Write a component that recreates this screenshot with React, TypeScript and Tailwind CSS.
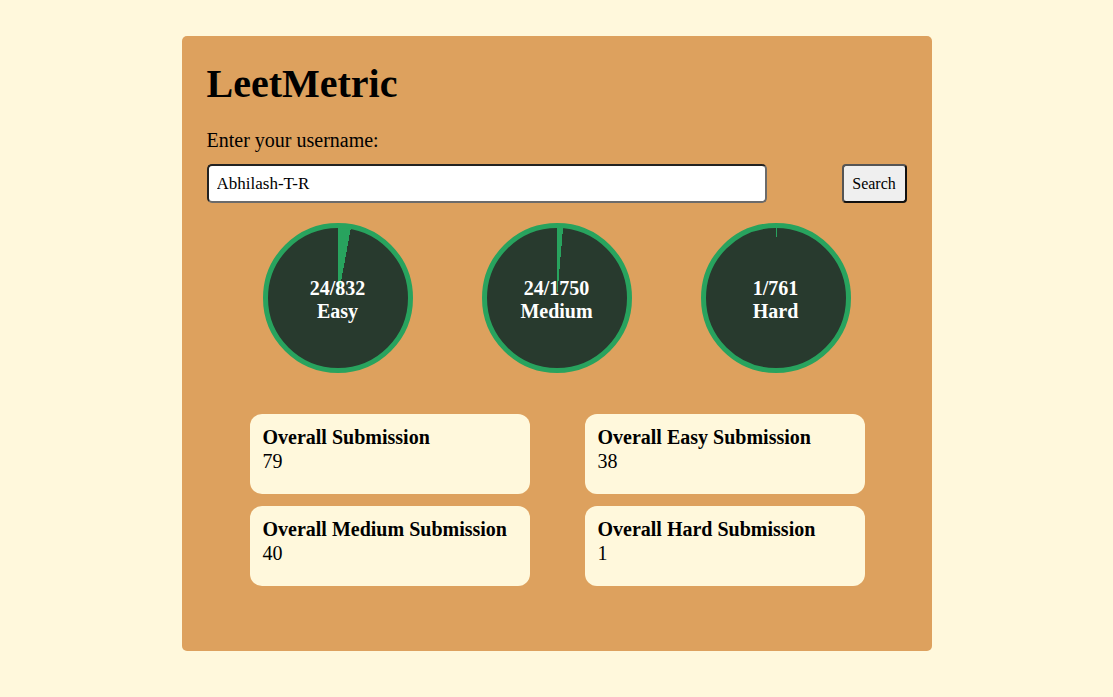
import React from "react";

type Stat = { label: string; solved: number; total: number };

const stats: Stat[] = [
  { label: "Easy", solved: 24, total: 832 },
  { label: "Medium", solved: 24, total: 1750 },
  { label: "Hard", solved: 1, total: 761 },
];

const cards = [
  { title: "Overall Submission", value: 79 },
  { title: "Overall Easy Submission", value: 38 },
  { title: "Overall Medium Submission", value: 40 },
  { title: "Overall Hard Submission", value: 1 },
];

const ProgressCircle = ({ stat }: { stat: Stat }) => {
  const pct = (stat.solved / stat.total) * 100;
  return (
    <div
      className="w-[150px] h-[150px] rounded-full border-[5px] border-[#28a35e] flex flex-col items-center justify-center pt-[4px] text-white font-bold text-[20px] leading-[23px]"
      style={{
        background: `conic-gradient(#28a35e 0% ${pct}%, #283a2e ${pct}% 100%)`,
      }}
    >
      <span>
        {stat.solved}/{stat.total}
      </span>
      <span>{stat.label}</span>
    </div>
  );
};

export default function App() {
  return (
    <div
      className="min-h-screen bg-[#fff8dc] pt-[36px] text-black"
      style={{ fontFamily: '"Liberation Serif", "Times New Roman", serif' }}
    >
      <div className="mx-auto w-[750px] h-[615px] rounded-[5px] bg-[#dda15e] px-[25px] pt-[25px]">
        <h1 className="text-[40px] font-bold leading-[46px]">LeetMetric</h1>
        <p className="mt-[22px] text-[20px] leading-[23px]">Enter your username:</p>
        <div className="mt-[12px] flex items-center justify-between">
          <input
            defaultValue="Abhilash-T-R"
            className="w-[560px] h-[39px] rounded-[5px] border-2 border-t-[#222] border-l-[#222] border-b-[#6b6b6b] border-r-[#6b6b6b] bg-white px-[8px] text-[17px] outline-none"
            style={{ fontFamily: '"Liberation Serif", "Times New Roman", serif' }}
          />
          <button className="h-[39px] w-[65px] rounded-[4px] border-2 border-t-[#555] border-l-[#555] border-b-[#111] border-r-[#111] bg-[#efefef] text-[16px]">
            Search
          </button>
        </div>
        <div className="mt-[20px] flex justify-center gap-[69px]">
          {stats.map((s) => (
            <ProgressCircle key={s.label} stat={s} />
          ))}
        </div>
        <div className="mt-[41px] mx-auto grid w-[616px] pl-[1px] grid-cols-2 gap-x-[55px] gap-y-[12px]">
          {cards.map((c) => (
            <div
              key={c.title}
              className="h-[80px] rounded-[12px] bg-[#fff8dc] px-[13px] pt-[12px] text-[20px] leading-[23px]"
            >
              <div className="font-bold">{c.title}</div>
              <div className="mt-[1px]">{c.value}</div>
            </div>
          ))}
        </div>
      </div>
    </div>
  );
}
